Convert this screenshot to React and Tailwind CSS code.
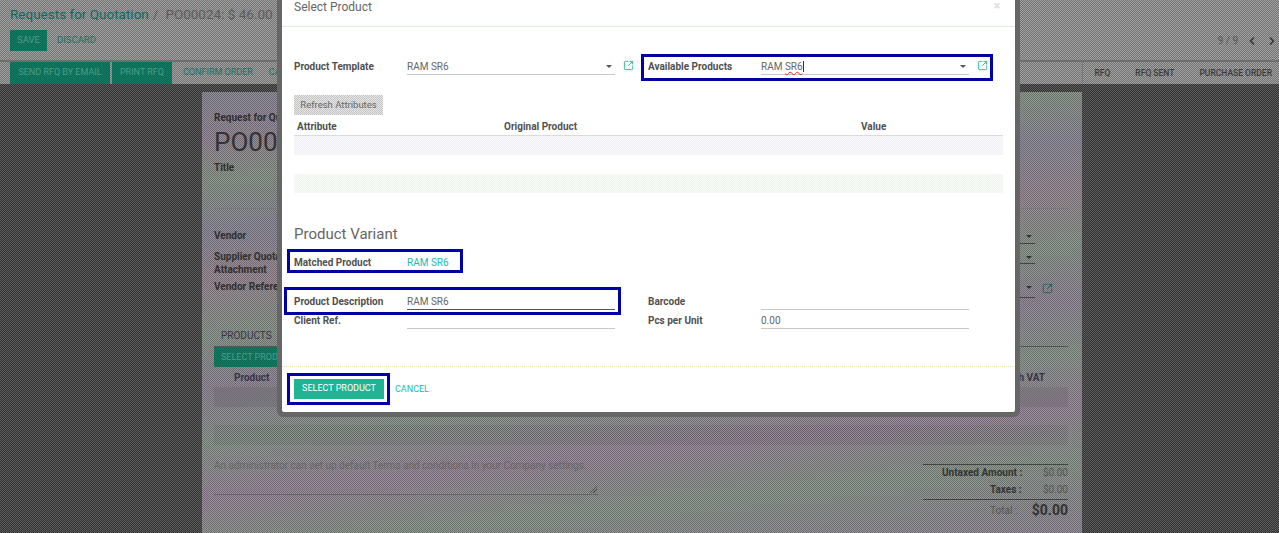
import { ChevronLeft, ChevronRight, SquareArrowOutUpRight } from "lucide-react";

const sheetBg =
  "bg-[repeating-conic-gradient(#0000_0_25%,#00000040_0_50%),linear-gradient(174deg,#8f8f9a_0%,#988c9a_9%,#8f9a8e_17%,#908e9c_26%,#9c8e98_36%,#8e9a90_46%,#968c9c_56%,#8f9a92_66%,#9c8c9e_76%,#8f9a90_86%,#968e9c_100%)] bg-[length:2px_2px,auto]";
const stripeBg = "bg-[repeating-conic-gradient(#00000022_0_25%,#0000_0_50%)] bg-[length:2px_2px]";
const tealBtn = "bg-[repeating-conic-gradient(#0b6a52_0_25%,#137a64_0_50%)] bg-[length:2px_2px] text-[#4f9a8a]";

function Caret({ className = "border-t-[#555]" }) {
  return <span className={`ml-auto mr-[3px] w-0 h-0 border-x-[3px] border-x-transparent border-t-[3px] ${className}`} />;
}

function Field({ label, value, dropdown, link, dark, children }) {
  return (
    <div className="flex w-[354px] items-start text-[10px] leading-[16px]">
      <div className="w-[113px] pt-px font-bold text-[#505050]">{label}</div>
      <div className={`w-[208px] h-[17px] pt-px flex items-center border-b ${dark ? "border-[#555]" : "border-[#c8c8c8]"} text-[#666]`}>
        {children || value}
        {dropdown && <Caret />}
      </div>
      {link && <SquareArrowOutUpRight size={11} strokeWidth={2} className="ml-[8px] mt-[2px] text-[#1abc9c]" />}
    </div>
  );
}

function SheetLabel({ children, className = "" }) {
  return <div className={`font-bold text-[#2f2f2f] text-[10px] leading-[13px] ${className}`}>{children}</div>;
}

function Highlight({ className }) {
  return <div className={`absolute border-[3px] border-[#0000a8] pointer-events-none ${className}`} />;
}

function SelectProductModal() {
  return (
    <div className="absolute left-[282px] top-0 w-[733px] h-[412px] bg-white flex flex-col rounded-b-[2px] shadow-[0_0_0_5px_#666666]">
      <div className="h-[27px] px-3 border-b border-[#dcecdc] flex items-start justify-between">
        <span className="text-[12px] leading-[13px] pt-px text-[#666]">Select Product</span>
        <span className="text-[12px] leading-[12px] font-bold text-[#ddd] pr-[3px]">×</span>
      </div>

      <div className="px-3">
        <div className="flex mt-[31px]">
          <Field label="Product Template" value="RAM SR6" dropdown link />
          <Field label="Available Products" dropdown link>
            <span>
              RAM <span className="underline decoration-wavy decoration-[#e02020]">SR6</span>
            </span>
            <span className="w-px h-[11px] bg-[#333]" />
          </Field>
        </div>

        <button className="block mt-[20px] h-5 w-[89px] text-[9.5px] text-[#666] bg-[repeating-conic-gradient(#c4c4c4_0_25%,#e6e6e6_0_50%)] bg-[length:2px_2px]">
          Refresh Attributes
        </button>

        <div className="w-[709px]">
          <div className="h-[21px] pt-[2px] flex items-center border-b border-[#d4e0d4] text-[10px] font-bold text-[#505050]">
            <span className="w-[210px] pl-[3px]">Attribute</span>
            <span className="w-[357px]">Original Product</span>
            <span>Value</span>
          </div>
          <div className="h-[19px] bg-[repeating-conic-gradient(#eeecf6_0_25%,#fcfcfc_0_50%)] bg-[length:2px_2px]" />
          <div className="h-[19px]" />
          <div className="h-[19px] bg-[repeating-conic-gradient(#ecf4ec_0_25%,#fcfcfc_0_50%)] bg-[length:2px_2px]" />
        </div>

        <h2 className="mt-[31px] h-5 text-[15px] leading-5 text-[#666]">Product Variant</h2>

        <div className="mt-[10px] pt-px flex text-[10px] leading-4">
          <div className="w-[113px] font-bold text-[#505050]">Matched Product</div>
          <div className="text-[#1abcb0]">RAM SR6</div>
        </div>

        <div className="flex mt-[22px]">
          <Field label="Product Description" value="RAM SR6" dark />
          <Field label="Barcode" />
        </div>
        <div className="flex mt-[2px]">
          <Field label="Client Ref." />
          <Field label="Pcs per Unit" value="0.00" />
        </div>
      </div>

      <div className="mt-auto h-[46px] px-3 pt-3 border-t border-dotted border-[#e8e4b0] flex items-start">
        <button className="h-5 w-[90px] bg-[#1fb594] text-white text-[9px]">SELECT PRODUCT</button>
        <span className="ml-[11px] h-5 leading-5 text-[9px] text-[#1abcb0]">CANCEL</span>
      </div>

      <Highlight className="left-[359px] top-[54px] w-[352px] h-[27px]" />
      <Highlight className="left-[5px] top-[249px] w-[176px] h-[24px]" />
      <Highlight className="left-[2px] top-[287px] w-[337px] h-[28px]" />
      <Highlight className="left-[5px] top-[373px] w-[103px] h-[32px]" />
    </div>
  );
}

function ControlPanel() {
  return (
    <div className="h-[62px] pl-[10px] pr-px pt-[5px] flex flex-col border-b-2 border-[#6e6e6e]">
      <div className="h-[18px] flex items-center text-[13.5px] whitespace-nowrap">
        <span className="text-[#0d6b60]">Requests for Quotation</span>
        <span className="text-[#5c5c5c] ml-[4px]">/</span>
        <span className="text-[#5c5c5c] ml-[7px]">PO00024: $ 46.00</span>
      </div>
      <div className="mt-[7px] flex items-center text-[9.5px]">
        <button className={`h-[21px] w-[37px] ${tealBtn}`}>SAVE</button>
        <span className="ml-[10px] text-[#1f6f60]">DISCARD</span>
        <span className="ml-auto text-[#555] text-[10px]">9 / 9</span>
        <ChevronLeft size={12} strokeWidth={3} className="ml-[8px] text-[#333]" />
        <ChevronRight size={12} strokeWidth={3} className="ml-[8px] text-[#333]" />
      </div>
    </div>
  );
}

function StatusBar() {
  return (
    <div className="h-[22px] pl-[10px] pr-[7px] flex items-stretch text-[9px] whitespace-nowrap">
      <button className={`w-[100px] ${tealBtn}`}>SEND RFQ BY EMAIL</button>
      <button className={`ml-[2px] w-[60px] ${tealBtn}`}>PRINT RFQ</button>
      <span className="ml-[11px] self-center text-[#1f6f60]">CONFIRM ORDER</span>
      <span className="ml-[16px] self-center text-[#1f6f60]">CANCEL</span>
      <div className="ml-auto flex items-center text-[8.5px] font-medium text-[#3c3c3c]">
        <span className="h-full pl-[11px] flex items-center border-l border-[#777]">RFQ</span>
        <span className="ml-[25px]">RFQ SENT</span>
        <span className="ml-[25px]">PURCHASE ORDER</span>
      </div>
    </div>
  );
}

function VendorRow({ label, height, fieldHeight, link, labelClass }) {
  return (
    <div className={`flex justify-between items-start ${height}`}>
      <SheetLabel className={labelClass}>{label}</SheetLabel>
      <div className="relative w-[200px] mr-[33px]">
        <div className={`flex items-start pt-[6px] border-b border-[#444] ${fieldHeight}`}>
          <Caret className="border-t-[#333]" />
        </div>
        {link && <SquareArrowOutUpRight size={11} strokeWidth={2} className="absolute top-[3px] -right-[18px] text-[#0d6b60]" />}
      </div>
    </div>
  );
}

function Sheet() {
  return (
    <div className={`ml-[202px] w-[880px] h-[441px] mt-2 pl-3 pr-[14px] pt-[19px] ${sheetBg}`}>
      <SheetLabel>Request for Quotation</SheetLabel>
      <div className="mt-[3px] text-[26px] leading-[30px] text-[#333]">PO00024</div>
      <SheetLabel className="mt-[4px]">Title</SheetLabel>
      <div className="mt-[34px] border-b border-[#777]" />

      <div className="mt-[20px]">
        <VendorRow label="Vendor" height="h-[15px]" fieldHeight="h-[15px]" />
        <div className="mt-[6px]">
          <VendorRow label="Supplier Quotation Attachment" height="h-[26px]" fieldHeight="h-[14px]" labelClass="w-[90px]" />
        </div>
        <div className="mt-[4px]">
          <VendorRow label="Vendor Reference" height="h-[18px]" fieldHeight="h-[18px]" link />
        </div>
      </div>

      <div className="mt-[31px] ml-[7px] text-[10px] leading-[13px] text-[#3a3348]">PRODUCTS</div>
      <div className="mt-[4px] border-b border-[#555]" />
      <div className={`h-5 w-[100px] text-[9px] leading-5 pl-[7px] ${tealBtn}`}>SELECT PRODUCT</div>

      <div className="h-[21px] pr-[23px] flex items-center justify-between border-b border-[#777] text-[10px] font-bold text-[#3a3348]">
        <span className="ml-5">Product</span>
        <span>with VAT</span>
      </div>
      <div className={`h-[19px] ${stripeBg}`} />
      <div className="h-[18px]" />
      <div className={`h-5 ${stripeBg}`} />

      <div className="flex items-start">
        <div className="relative w-[384px] h-[50px] pt-[14px] border-b border-[#666] text-[10px] leading-[13px] text-[#666] whitespace-nowrap">
          An administrator can set up default Terms and conditions in your Company settings.
          <svg width="8" height="8" viewBox="0 0 8 8" className="absolute right-0 bottom-0 text-[#444]">
            <path d="M0 7L7 0M3 7L7 3" stroke="currentColor" fill="none" />
          </svg>
        </div>
        <div className="ml-auto mt-[19px] w-[145px] text-[10px] text-[#333]">
          <div className="flex justify-between border-t border-[#444] h-[16px] leading-[15px] font-bold">
            <span className="ml-[19px]">Untaxed Amount :</span>
            <span className="font-normal text-[#555]">$0.00</span>
          </div>
          <div className="flex justify-between items-center h-[19px]">
            <span className="ml-[67px] font-bold">Taxes :</span>
            <span className="text-[#555]">$0.00</span>
          </div>
          <div className="flex justify-between items-center border-t border-[#444] h-[21px]">
            <span className="ml-[67px] text-[#555]">Total :</span>
            <span className="text-[14px] font-bold">$0.00</span>
          </div>
        </div>
      </div>
    </div>
  );
}

export default function App() {
  return (
    <div className="relative w-[1279px] h-[533px] overflow-hidden font-['Roboto',sans-serif] bg-[repeating-conic-gradient(#333333_0_25%,#5c5c5c_0_50%)] bg-[length:2px_2px]">
      <div className="bg-[repeating-conic-gradient(#747474_0_25%,#a0a0a0_0_50%)] bg-[length:2px_2px]">
        <ControlPanel />
        <StatusBar />
      </div>
      <Sheet />
      <SelectProductModal />
    </div>
  );
}
